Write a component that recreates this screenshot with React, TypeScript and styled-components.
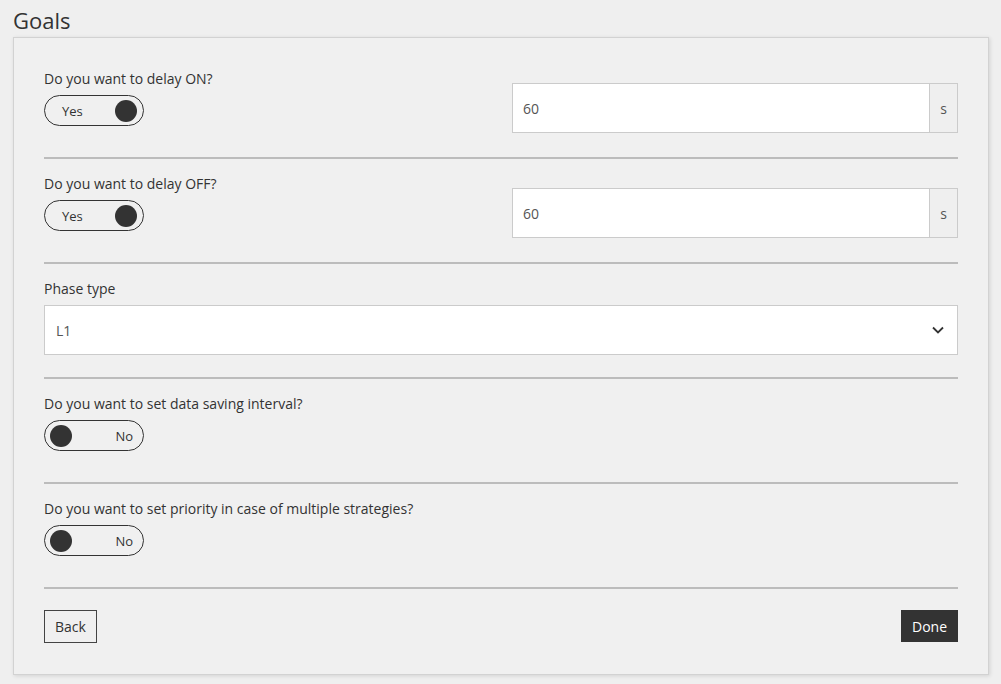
import React, { useState } from 'react';
import styled, { createGlobalStyle } from 'styled-components';

const GlobalStyle = createGlobalStyle`
  * { box-sizing: border-box; }
  html, body {
    margin: 0;
    background: #efefef;
    font-family: 'Open Sans', 'Liberation Sans', sans-serif;
    color: #333;
  }
`;

const Page = styled.div`
  padding: 5px 12px 10px 13px;
`;

const Title = styled.h1`
  margin: 0 0 2px;
  font-size: 22px;
  line-height: 30px;
  font-weight: 400;
  color: #333;
`;

const Card = styled.div`
  background: #f0f0f0;
  border: 1px solid #d2d2d2;
  box-shadow: 1px 1px 4px rgba(0, 0, 0, 0.12);
  padding: 16px 30px 31px;
`;

const Section = styled.div<{ $split?: boolean }>`
  padding: 15px 0 22px;
  border-bottom: 2px solid #bcbcbc;
  display: ${(p) => (p.$split ? 'grid' : 'block')};
  grid-template-columns: 1fr 1fr;
  align-items: start;
  column-gap: 22px;
`;

const Label = styled.div`
  font-size: 14px;
  line-height: 20px;
  margin-bottom: 6px;
`;

const ToggleBox = styled.button<{ $on: boolean }>`
  width: 100px;
  height: 31px;
  border: 1px solid #333;
  border-radius: 16px;
  background: transparent;
  display: flex;
  align-items: center;
  flex-direction: ${(p) => (p.$on ? 'row' : 'row-reverse')};
  justify-content: space-between;
  padding: ${(p) => (p.$on ? '0 6px 0 17px' : '0 10px 0 5px')};
  font-family: inherit;
  font-size: 13px;
  color: #333;
  cursor: pointer;
  margin: 1px 0 9px;
`;

const Knob = styled.span`
  width: 22px;
  height: 22px;
  border-radius: 50%;
  background: #333;
`;

const InputGroup = styled.div`
  margin-top: 14px;
  display: flex;
  height: 50px;
  border: 1px solid #cbcbcb;
  background: #fff;
`;

const Field = styled.input`
  flex: 1;
  min-width: 0;
  border: none;
  outline: none;
  padding: 0 10px;
  font-family: inherit;
  font-size: 14px;
  color: #555;
  background: #fff;
`;

const Addon = styled.span`
  width: 28px;
  border-left: 1px solid #cbcbcb;
  background: #efefef;
  display: flex;
  align-items: center;
  justify-content: center;
  font-size: 14px;
  color: #555;
`;

const Select = styled.div`
  height: 50px;
  border: 1px solid #cbcbcb;
  background: #fff;
  display: flex;
  align-items: center;
  justify-content: space-between;
  padding: 0 13px 0 11px;
  font-size: 14px;
  color: #555;
`;

const Footer = styled.div`
  display: flex;
  justify-content: space-between;
  align-items: flex-start;
  padding-top: 21px;
`;

const Button = styled.button<{ $primary?: boolean }>`
  height: ${(p) => (p.$primary ? '32px' : '33px')};
  padding: 0 10px;
  font-family: inherit;
  font-size: 14px;
  border: 1px solid ${(p) => (p.$primary ? '#333' : '#444')};
  background: ${(p) => (p.$primary ? '#333' : 'transparent')};
  color: ${(p) => (p.$primary ? '#fff' : '#333')};
  cursor: pointer;
`;

function Toggle({ initial }: { initial: boolean }) {
  const [on, setOn] = useState(initial);
  return (
    <ToggleBox $on={on} onClick={() => setOn(!on)}>
      <span>{on ? 'Yes' : 'No'}</span>
      <Knob />
    </ToggleBox>
  );
}

export default function App() {
  return (
    <>
      <GlobalStyle />
      <Page>
        <Title>Goals</Title>
        <Card>
          <Section $split>
            <div>
              <Label>Do you want to delay ON?</Label>
              <Toggle initial />
            </div>
            <InputGroup>
              <Field defaultValue="60" />
              <Addon>s</Addon>
            </InputGroup>
          </Section>
          <Section $split>
            <div>
              <Label>Do you want to delay OFF?</Label>
              <Toggle initial />
            </div>
            <InputGroup>
              <Field defaultValue="60" />
              <Addon>s</Addon>
            </InputGroup>
          </Section>
          <Section>
            <Label>Phase type</Label>
            <Select>
              <span>L1</span>
              <svg width="12" height="8" viewBox="0 0 12 8">
                <path d="M1 1.5l5 5 5-5" fill="none" stroke="#333" strokeWidth="1.8" />
              </svg>
            </Select>
          </Section>
          <Section>
            <Label>Do you want to set data saving interval?</Label>
            <Toggle initial={false} />
          </Section>
          <Section>
            <Label>Do you want to set priority in case of multiple strategies?</Label>
            <Toggle initial={false} />
          </Section>
          <Footer>
            <Button>Back</Button>
            <Button $primary>Done</Button>
          </Footer>
        </Card>
      </Page>
    </>
  );
}
